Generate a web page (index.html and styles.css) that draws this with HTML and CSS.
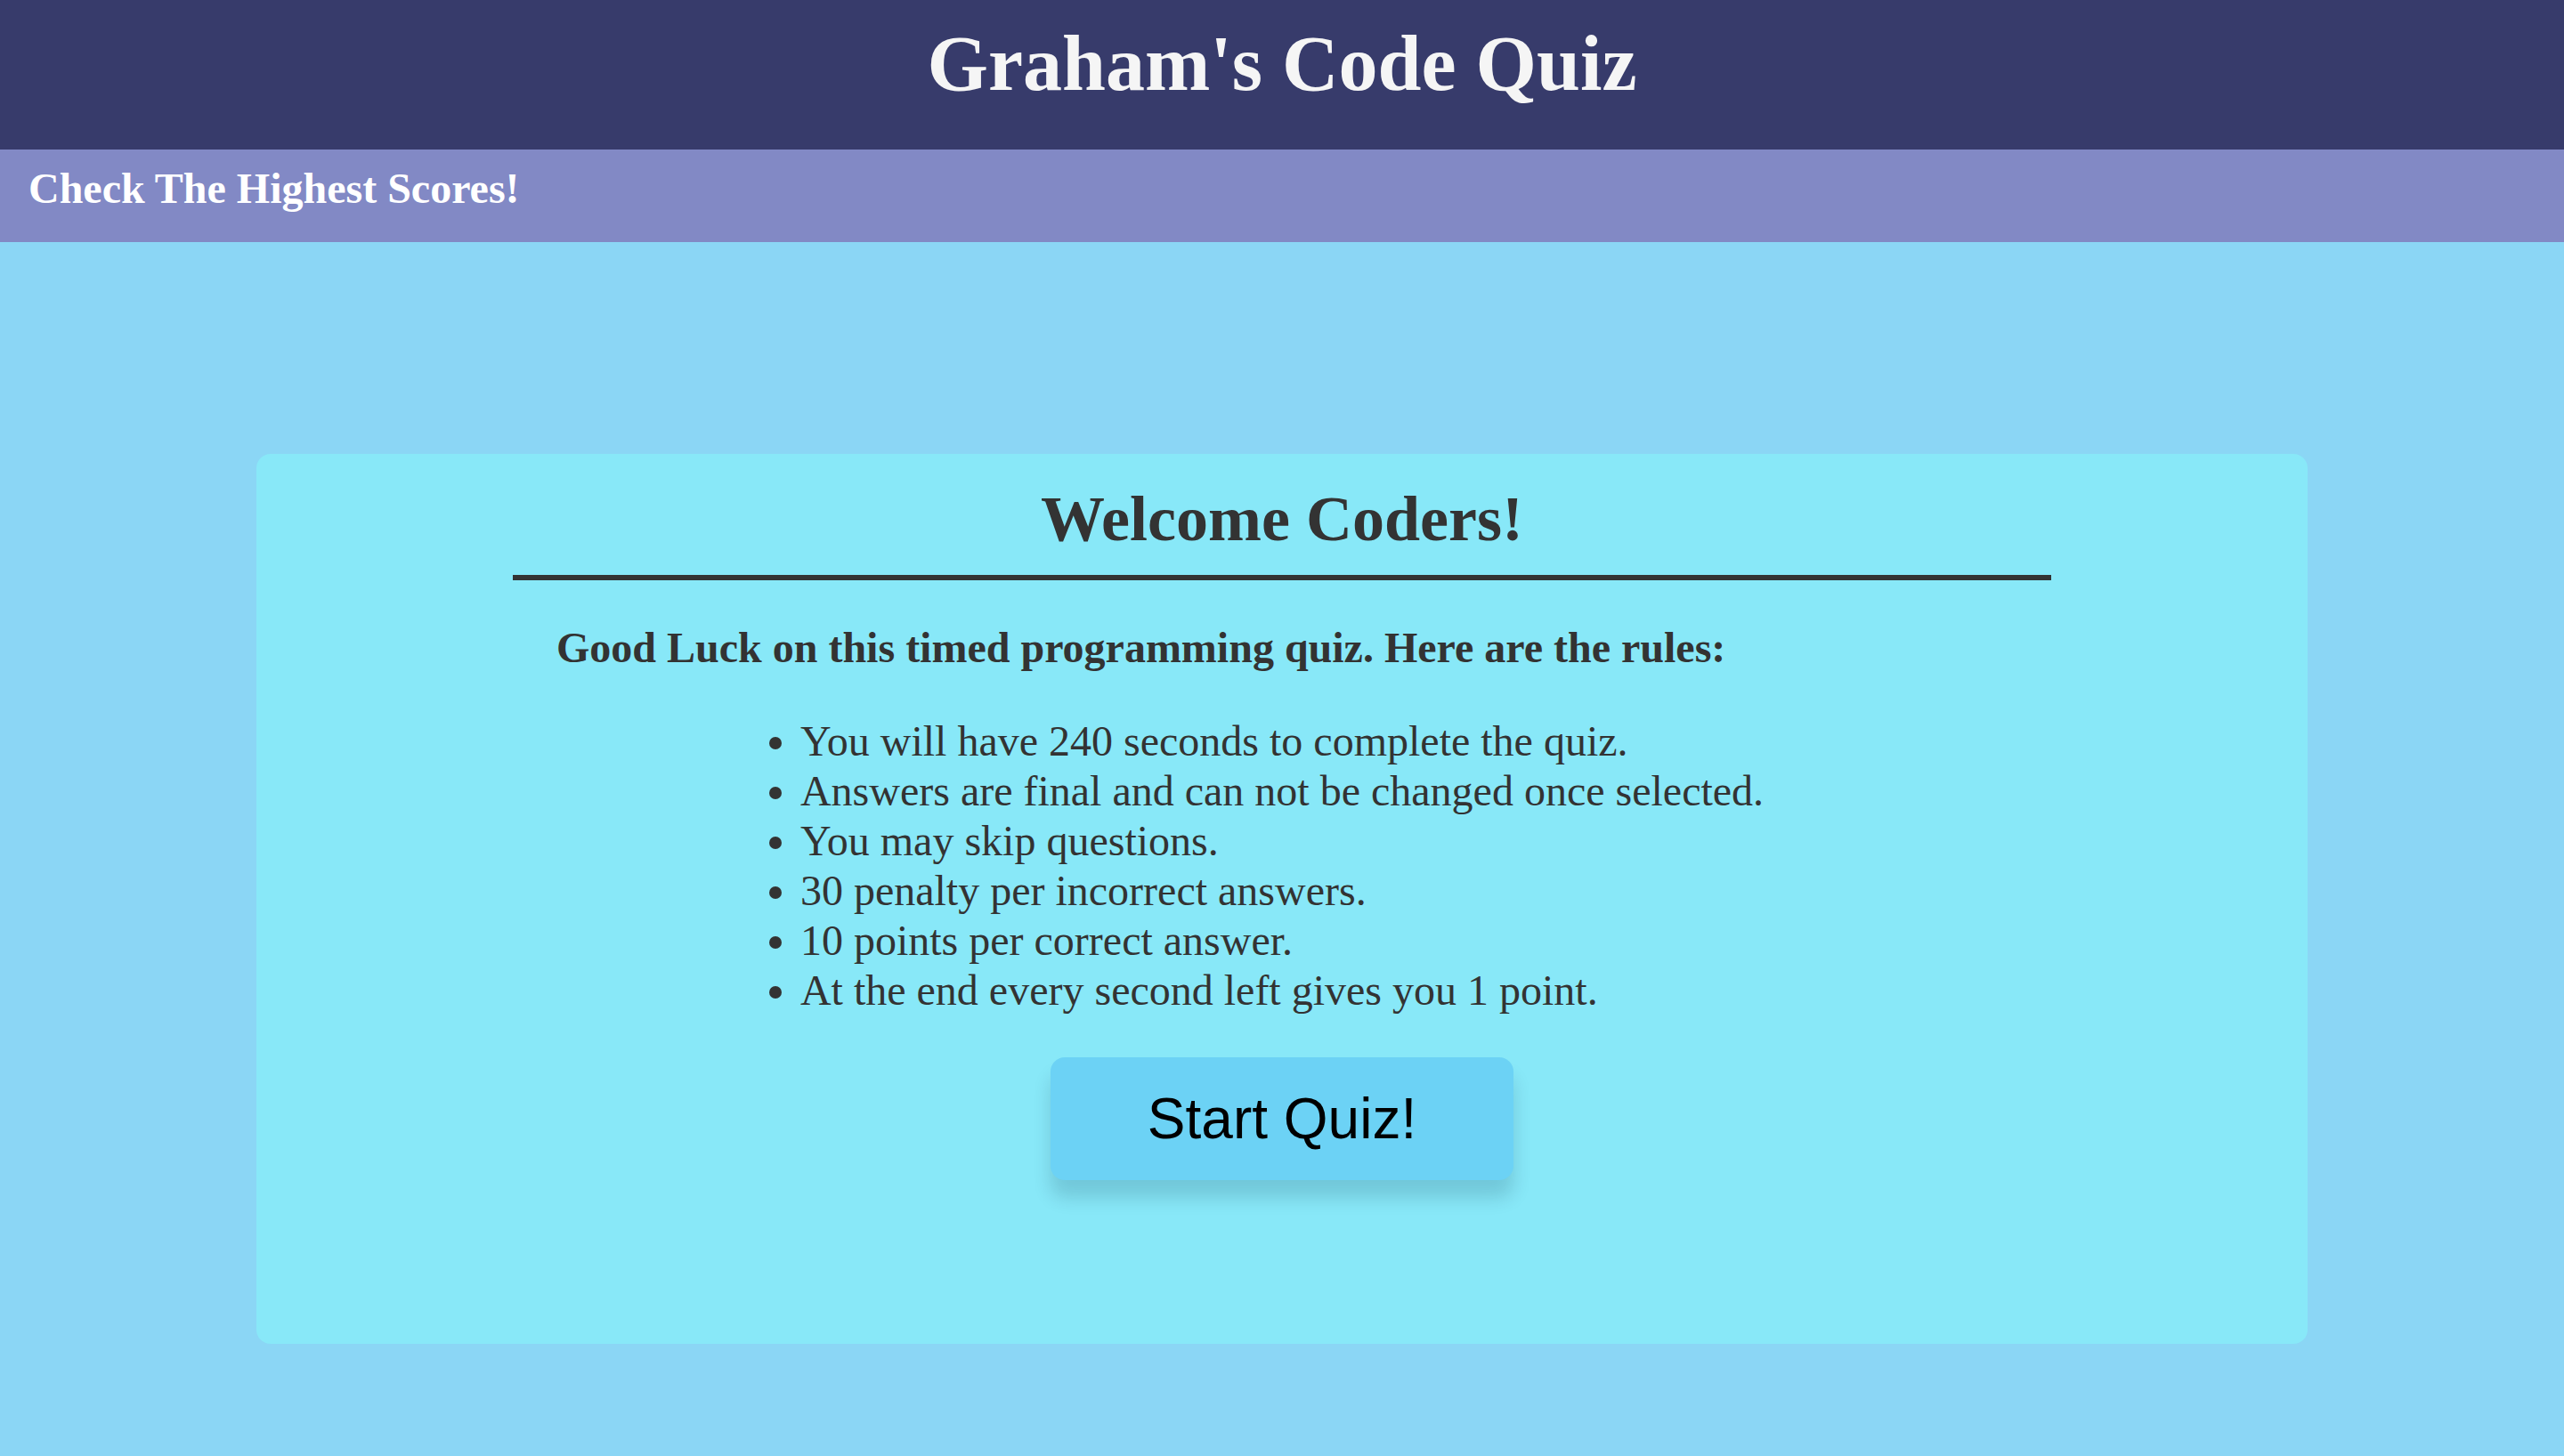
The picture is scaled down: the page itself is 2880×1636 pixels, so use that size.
FILE: index.html
```html
<!DOCTYPE html>
<html lang="en">
<head>
<meta charset="utf-8">
<title>Graham's Code Quiz</title>
<link rel="stylesheet" href="styles.css">
</head>
<body>
<header class="site-header">
  <h1 class="site-title">Graham's Code Quiz</h1>
</header>
<nav class="score-bar">
  <a class="score-link" href="#">Check The Highest Scores!</a>
</nav>
<main class="page">
  <section class="card">
    <h2 class="card-title">Welcome Coders!</h2>
    <div class="rule-line"></div>
    <div class="rules">
      <p class="rules-intro">Good Luck on this timed programming quiz. Here are the rules:</p>
    </div>
    <ul class="rules-list">
      <li>You will have 240 seconds to complete the quiz.</li>
      <li>Answers are final and can not be changed once selected.</li>
      <li>You may skip questions.</li>
      <li>30 penalty per incorrect answers.</li>
      <li>10 points per correct answer.</li>
      <li>At the end every second left gives you 1 point.</li>
    </ul>
    <div class="actions">
      <button class="start-btn" type="button">Start Quiz!</button>
    </div>
  </section>
</main>
</body>
</html>
```

FILE: styles.css
```css
html, body {
  margin: 0;
  padding: 0;
}

body {
  background: #8bd6f5;
  font-family: "Liberation Serif", "Times New Roman", serif;
  color: #333333;
  min-height: 1636px;
}

.site-header {
  box-sizing: border-box;
  height: 168px;
  padding-top: 28px;
  background: #373b6b;
}

.site-title {
  margin: 0;
  font-size: 88px;
  line-height: 88px;
  font-weight: bold;
  text-align: center;
  color: #f5f5f5;
}

.score-bar {
  box-sizing: border-box;
  height: 104px;
  padding: 20px 0 0 32px;
  background: #8289c5;
}

.score-link {
  display: block;
  font-size: 48px;
  line-height: 48px;
  font-weight: bold;
  color: #ffffff;
  text-decoration: none;
}

.page {
  padding-top: 238px;
}

.card {
  box-sizing: border-box;
  width: 2304px;
  height: 1000px;
  margin: 0 auto;
  padding-top: 37px;
  background: #88e8f8;
  border-radius: 16px;
  display: flex;
  flex-direction: column;
}

.card-title {
  margin: 0;
  font-size: 72px;
  line-height: 72px;
  font-weight: bold;
  text-align: center;
  color: #333333;
}

.rule-line {
  width: 1728px;
  height: 6px;
  margin: 27px auto 0;
  background: #333333;
}

.rules {
  width: 1728px;
  margin: 48px auto 0;
}

.rules-intro {
  margin: 0;
  padding-left: 49px;
  font-size: 48px;
  line-height: 56px;
  font-weight: bold;
  color: #333333;
}

.rules-list {
  width: fit-content;
  margin: 49px auto 0;
  padding: 0;
  font-size: 48px;
  line-height: 56px;
  color: #333333;
}

.rules-list li {
  margin: 0;
}

.actions {
  display: flex;
  justify-content: center;
  margin-top: 47px;
}

.start-btn {
  width: 520px;
  height: 138px;
  border: none;
  border-radius: 16px;
  background: #6cd2f5;
  color: #000000;
  font-family: "Liberation Sans", Arial, sans-serif;
  font-size: 64px;
  padding: 0;
  box-shadow: 0 20px 20px rgba(0, 40, 60, 0.16);
  cursor: pointer;
}
```
